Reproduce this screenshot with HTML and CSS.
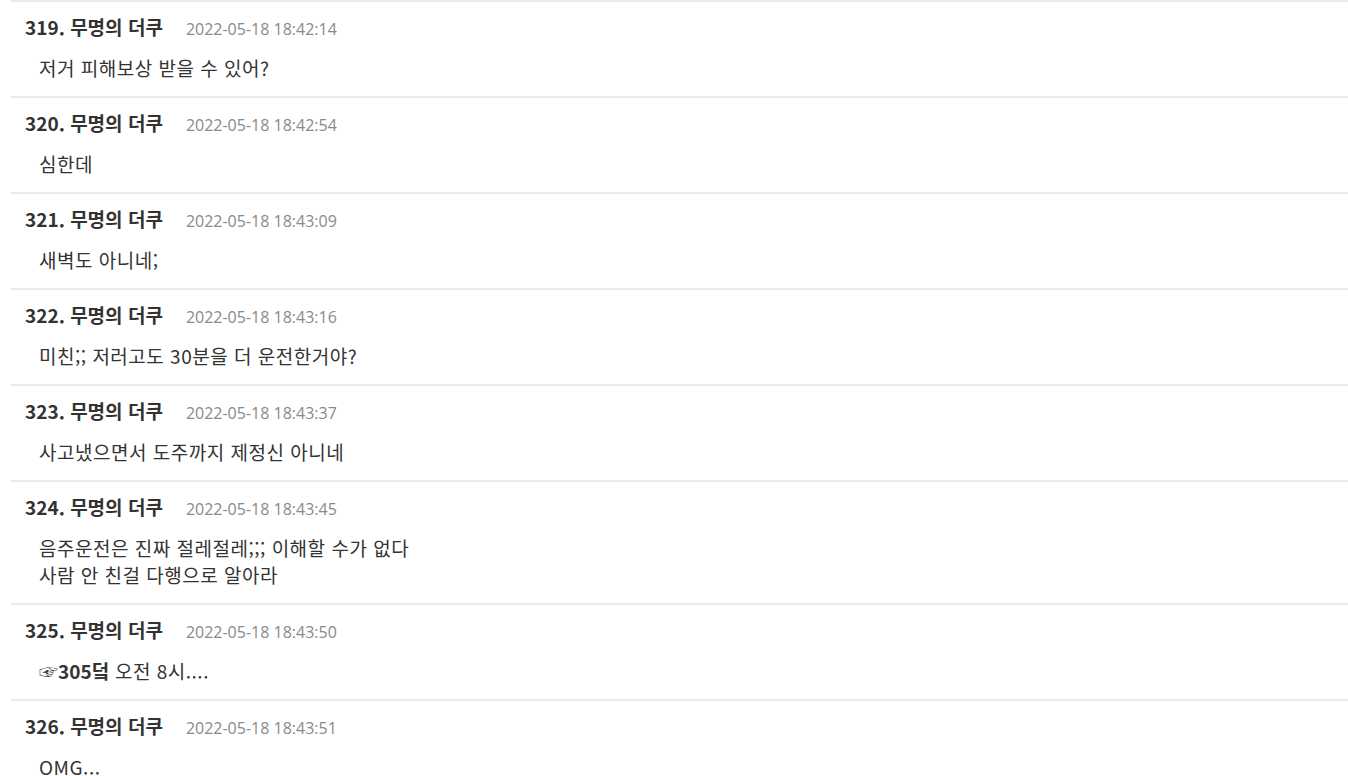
FILE: index.html
```html
<!DOCTYPE html>
<html lang="ko">
<head>
<meta charset="utf-8">
<link rel="stylesheet" href="styles.css">
</head>
<body>
<div class="list">
  <div class="item">
    <div class="head"><span class="name">319. 무명의 더쿠</span><span class="date">2022-05-18 18:42:14</span></div>
    <div class="body">저거 피해보상 받을 수 있어?</div>
  </div>
  <div class="item">
    <div class="head"><span class="name">320. 무명의 더쿠</span><span class="date">2022-05-18 18:42:54</span></div>
    <div class="body">심한데</div>
  </div>
  <div class="item">
    <div class="head"><span class="name">321. 무명의 더쿠</span><span class="date">2022-05-18 18:43:09</span></div>
    <div class="body">새벽도 아니네;</div>
  </div>
  <div class="item">
    <div class="head"><span class="name">322. 무명의 더쿠</span><span class="date">2022-05-18 18:43:16</span></div>
    <div class="body">미친;; 저러고도 30분을 더 운전한거야?</div>
  </div>
  <div class="item">
    <div class="head"><span class="name">323. 무명의 더쿠</span><span class="date">2022-05-18 18:43:37</span></div>
    <div class="body">사고냈으면서 도주까지 제정신 아니네</div>
  </div>
  <div class="item">
    <div class="head"><span class="name">324. 무명의 더쿠</span><span class="date">2022-05-18 18:43:45</span></div>
    <div class="body">음주운전은 진짜 절레절레;;; 이해할 수가 없다<br>사람 안 친걸 다행으로 알아라</div>
  </div>
  <div class="item">
    <div class="head"><span class="name">325. 무명의 더쿠</span><span class="date">2022-05-18 18:43:50</span></div>
    <div class="body"><a class="ref">☞305덬</a> 오전 8시....</div>
  </div>
  <div class="item">
    <div class="head"><span class="name">326. 무명의 더쿠</span><span class="date">2022-05-18 18:43:51</span></div>
    <div class="body">OMG...</div>
  </div>
</div>
</body>
</html>
```
FILE: styles.css
```css
html, body {
  margin: 0;
  padding: 0;
  background: #fff;
}
body {
  font-family: "Noto Sans CJK KR", "Open Sans", sans-serif;
  color: #333;
  overflow: hidden;
}
.list {
  margin-left: 11px;
}
.item {
  border-top: 2px solid #ebebeb;
  padding: 13px 14px 15px 14px;
}
.head {
  height: 24px;
  line-height: 24px;
  display: flex;
  align-items: baseline;
}
.name {
  font-size: 19px;
  font-weight: 700;
  color: #333;
}
.date {
  font-family: "Open Sans", sans-serif;
  font-size: 16px;
  color: #8a8a8a;
  margin-left: 23px;
}
.body {
  margin-top: 15px;
  padding-left: 14px;
  font-size: 19px;
  line-height: 27px;
  letter-spacing: 0.5px;
  color: #333;
}
.ref {
  font-weight: 700;
  color: #333;
  letter-spacing: 0;
}
```
